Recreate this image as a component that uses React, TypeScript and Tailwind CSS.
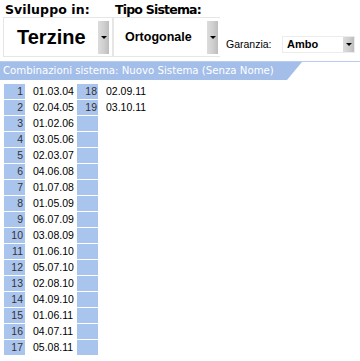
import React from "react";

const rows: [string, string | null][] = [
  ["01.03.04", "02.09.11"],
  ["02.04.05", "03.10.11"],
  ["01.02.06", null],
  ["03.05.06", null],
  ["02.03.07", null],
  ["04.06.08", null],
  ["01.07.08", null],
  ["01.05.09", null],
  ["06.07.09", null],
  ["03.08.09", null],
  ["01.06.10", null],
  ["05.07.10", null],
  ["02.08.10", null],
  ["04.09.10", null],
  ["01.06.11", null],
  ["04.07.11", null],
  ["05.08.11", null],
];

function DropBtn({ h }: { h: string }) {
  return (
    <div
      className={`w-[11px] ${h} flex items-center justify-center bg-gradient-to-r from-[#dcdcdc] via-[#d0d0d0] to-[#bdbdbd]`}
    >
      <div className="w-0 h-0 border-l-[3px] border-r-[3px] border-t-[3px] border-l-transparent border-r-transparent border-t-black" />
    </div>
  );
}

export default function App() {
  return (
    <div className="w-[360px] h-[361px] bg-white overflow-hidden font-['Liberation_Sans',Arial,sans-serif] text-black">
      {/* top toolbar */}
      <div className="flex h-[61px]">
        {/* group 1 */}
        <div className="w-[113px] pl-[3px] pt-[3px]">
          <div className="pl-[2px] h-[14px] leading-[14px] text-[12.5px] font-bold font-['DejaVu_Sans',sans-serif] tracking-[0.1px]">
            Sviluppo in:
          </div>
          <div className="h-[40px] border border-[#e6e6e6] flex items-center pl-[13px] pr-[3px]">
            <div className="flex-1 text-[20px] font-bold leading-none">Terzine</div>
            <DropBtn h="h-[33px]" />
          </div>
        </div>
        {/* group 2 */}
        <div className="w-[107px] pt-[3px]">
          <div className="pl-[2px] h-[14px] leading-[14px] text-[12.5px] font-bold font-['DejaVu_Sans',sans-serif] tracking-[-0.8px]">
            Tipo Sistema:
          </div>
          <div className="h-[40px] border-l border-t border-b border-[#e6e6e6] flex items-center pl-[11px] pr-[2px]">
            <div className="flex-1 text-[12.5px] font-bold leading-none">Ortogonale</div>
            <DropBtn h="h-[33px]" />
          </div>
        </div>
        {/* group 3 */}
        <div className="flex-1 flex items-end pb-[8px]">
          <div className="pl-[6px] w-[62px] text-[10.5px] leading-[13px] pb-[2px]">Garanzia:</div>
          <div className="w-[73px] h-[17px] border border-[#ececec] flex items-center pl-[4px]">
            <div className="flex-1 text-[11px] font-bold leading-none">Ambo</div>
            <DropBtn h="h-[15px]" />
          </div>
        </div>
      </div>
      {/* header */}
      <div className="h-[1px] bg-[#b6cdf0]" />
      <div className="h-[18px] w-[302px] bg-[#a2bee9] [clip-path:polygon(0_0,100%_0,calc(100%-15px)_100%,0_100%)] flex items-center pl-[3px] text-white text-[10.2px] font-['DejaVu_Sans',sans-serif] leading-none">
        Combinazioni sistema: Nuovo Sistema (Senza Nome)
      </div>
      {/* grid */}
      <div className="pt-[4px] pl-[4px] flex flex-col gap-[1px]">
        {rows.map(([a, b], i) => (
          <div key={i} className="flex h-[15px] text-[10.5px] leading-[15px]">
            <div className="w-[21px] bg-[#a9c5ee] text-right pr-[2px] text-[#333]">{i + 1}</div>
            <div className="w-[52px] pl-[8px]">{a}</div>
            <div className="w-[21px] bg-[#a9c5ee] text-right pr-[1px] text-[#333]">{b ? i + 18 : ""}</div>
            <div className="pl-[8px]">{b ?? ""}</div>
          </div>
        ))}
      </div>
    </div>
  );
}
